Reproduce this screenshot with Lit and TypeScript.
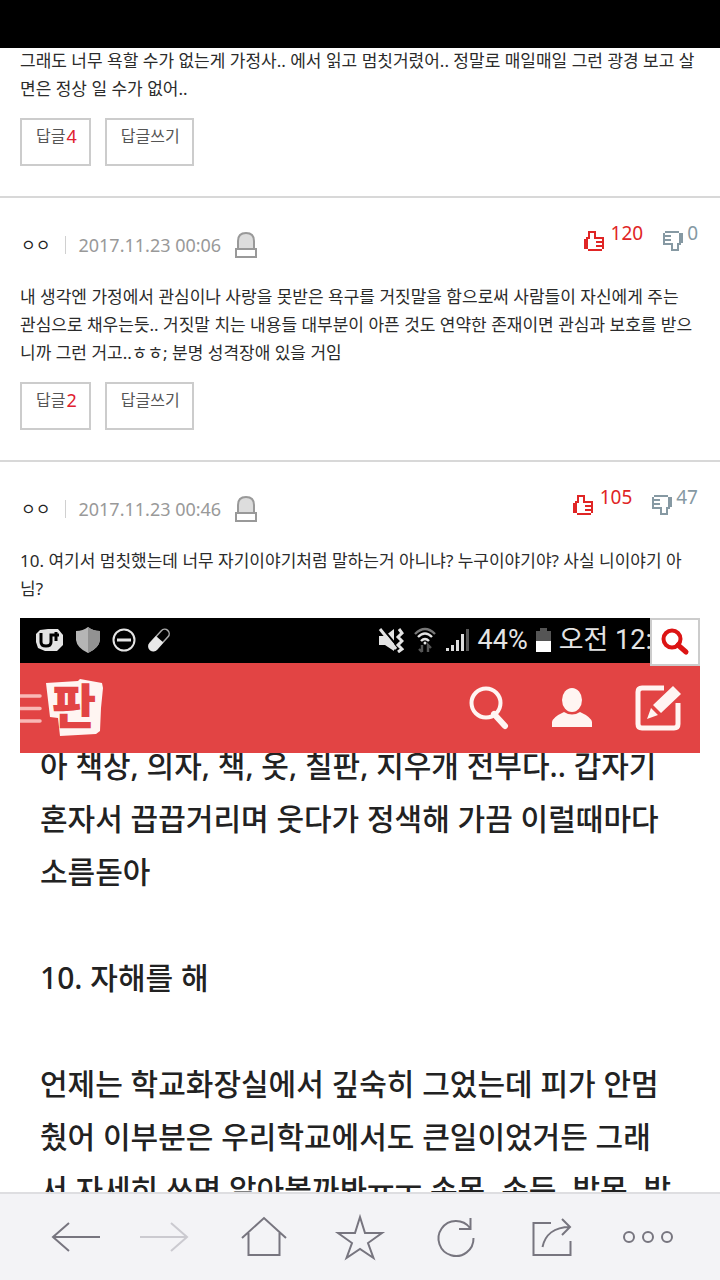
import { LitElement, html, css, svg, nothing } from "lit";
import { customElement, property } from "lit/decorators.js";

const THUMB = [
  "..####....",
  "..#..#....",
  "..#..#....",
  ".##..#####",
  "##.......#",
  "##....####",
  "##.......#",
  "##....####",
  "##.......#",
  "..#######.",
];

const pixelIcon = (rows: string[]) => html`
  <svg width="20" height="20" viewBox="0 0 10 10" shape-rendering="crispEdges" aria-hidden="true">
    ${rows.map((row, y) =>
      [...row].map((c, x) =>
        c === "#" ? svg`<rect x=${x} y=${y} width="1" height="1" fill="currentColor" />` : nothing
      )
    )}
  </svg>
`;

const THUMB_DOWN = [...THUMB].reverse().map((r) => [...r].reverse().join(""));

interface Comment {
  author?: string;
  date?: string;
  up?: number;
  down?: number;
  lines: string[];
  replies?: number;
  photo?: boolean;
}

const COMMENTS: Comment[] = [
  {
    lines: [
      "그래도 너무 욕할 수가 없는게 가정사.. 에서 읽고 멈칫거렸어.. 정말로 매일매일 그런 광경 보고 살",
      "면은 정상 일 수가 없어..",
    ],
    replies: 4,
  },
  {
    author: "ㅇㅇ",
    date: "2017.11.23 00:06",
    up: 120,
    down: 0,
    lines: [
      "내 생각엔 가정에서 관심이나 사랑을 못받은 욕구를 거짓말을 함으로써 사람들이 자신에게 주는",
      "관심으로 채우는듯.. 거짓말 치는 내용들 대부분이 아픈 것도 연약한 존재이면 관심과 보호를 받으",
      "니까 그런 거고..ㅎㅎ; 분명 성격장애 있을 거임",
    ],
    replies: 2,
  },
  {
    author: "ㅇㅇ",
    date: "2017.11.23 00:46",
    up: 105,
    down: 47,
    lines: [
      "10. 여기서 멈칫했는데 너무 자기이야기처럼 말하는거 아니냐? 누구이야기야? 사실 니이야기 아",
      "님?",
    ],
    photo: true,
  },
];

@customElement("photo-card")
export class PhotoCard extends LitElement {
  static styles = css`
    :host { display: block; position: relative; color: #222; }
    .status {
      display: flex; align-items: center; gap: 11px; box-sizing: border-box; height: 45px; padding: 0 48px 2px 16px;
      background: #000; color: #e4e4e4; overflow: hidden;
      font: 27px/42px Roboto, "Noto Sans CJK KR", sans-serif; white-space: nowrap;
    }
    .right { display: flex; align-items: center; gap: 8px; margin-left: auto; }
    svg { display: block; flex: none; }
    .bar {
      display: flex; align-items: center; height: 90px; padding-right: 19px;
      background: #e24444; color: #fff;
    }
    .bar button { border: 0; padding: 0; background: none; color: inherit; }
    .logo { margin-left: 4px; overflow: visible; }
    .logo text { font: 900 48px "Noto Sans CJK KR", sans-serif; }
    .tools { display: flex; align-items: center; gap: 43px; margin-left: auto; }
    .body { overflow: hidden; padding: 0 20px; background: #fff; }
    .text { margin: -14px 0 0; font: 500 30px/53px "Noto Sans", "Noto Sans CJK KR", sans-serif; }
    .text span { display: block; min-height: 53px; white-space: nowrap; }
    .zoom {
      position: absolute; top: 0; right: 0; display: grid; place-items: center;
      width: 50px; height: 48px; padding: 0; background: #fff; border: 2px solid #ccc;
    }
  `;

  render() {
    const lines = [
      "아 책상, 의자, 책, 옷, 칠판, 지우개 전부다.. 갑자기",
      "혼자서 끕끕거리며 웃다가 정색해 가끔 이럴때마다",
      "소름돋아",
      "",
      "10. 자해를 해",
      "",
      "언제는 학교화장실에서 깊숙히 그었는데 피가 안멈",
      "췄어 이부분은 우리학교에서도 큰일이었거든 그래",
      "서 자세히 쓰면 알아볼까봐ㅠㅜ 손목, 손등, 발목, 발",
    ];
    return html`
      <div class="status">
        <svg width="28" height="24" viewBox="0 0 28 24">
          <path d="M4 2L12 1 22 1 27 7V17L21 23H9L2 20L0 14V6Z" fill="#e4e4e4" />
          <path d="M5 5V14Q5 18 10 18T15 14V7H20V13M17 7H23M20 4V10" fill="none" stroke="#000" stroke-width="3" />
        </svg>
        <svg width="26" height="26" viewBox="0 0 26 26">
          <path d="M13 0Q18 4 25 4V13Q24 21 13 26Q2 21 1 13V4Q8 4 13 0Z" fill="#b5b5b5" />
          <path d="M13 0Q18 4 25 4V13Q24 21 13 26Z" fill="#929292" />
        </svg>
        <svg width="24" height="24" viewBox="0 0 24 24" fill="none" stroke="#e4e4e4">
          <circle cx="12" cy="12" r="10.5" stroke-width="2" /><path d="M5 12H19" stroke-width="3" />
        </svg>
        <svg width="24" height="26" viewBox="0 0 24 26">
          <g transform="rotate(42 12 13)">
            <rect x="7.5" y="0" width="9" height="26" rx="4.5" fill="none" stroke="#aaa" stroke-width="1.5" />
            <path d="M7 12H17V21.5A5 5 0 0 1 7 21.5Z" fill="#e8e8e8" />
          </g>
        </svg>
        <div class="right">
          <svg width="26" height="26" viewBox="0 0 26 26">
            <path d="M1 9H7L16 2V24L7 18H1Z" fill="#e4e4e4" />
            <path d="M4 1L20 20" stroke="#000" stroke-width="2" /><path d="M2 2L18 22" stroke="#e4e4e4" stroke-width="3" />
            <path d="M21 2L24 6 20 10 24 14 20 18 24 22 20 25" fill="none" stroke="#e4e4e4" stroke-width="3" />
          </svg>
          <svg width="26" height="26" viewBox="0 0 26 26" fill="none" stroke-width="2.4">
            <path d="M3 7Q13 -3 23 7" stroke="#777" />
            <path d="M6 10Q13 3 20 10M9 14Q13 10 17 14" stroke="#e4e4e4" />
            <circle cx="13" cy="16" r="1.5" fill="#e4e4e4" />
            <path d="M10 18V25M7 22L10 25M16 25V18L19 21" stroke="#555" />
          </svg>
          <svg width="24" height="24" viewBox="0 0 24 24">
            <path d="M0 23V20H3V23ZM5 23V17H8V23ZM10 23V12H13V23ZM15 23V6H18V23Z" fill="#ddd" />
            <path d="M20 23V1H23V23Z" fill="#555" />
          </svg>
          <span>44%</span>
          <svg width="15" height="24" viewBox="0 0 15 24">
            <path d="M4 0H11V3H15V24H0V3H4Z" fill="#555" /><path d="M0 13H15V24H0Z" fill="#fff" />
          </svg>
          <span>오전 12:</span>
        </div>
      </div>
      <div class="bar">
        <button aria-label="메뉴">
          <svg width="22" height="30" viewBox="0 0 22 30" stroke="#f9b9b6" stroke-width="3.5" stroke-linecap="round">
            <path d="M-2 3H20M-2 15.5H20M-2 28H20" />
          </svg>
        </button>
        <svg class="logo" width="58" height="58" viewBox="0 0 58 58">
          <path d="M0 4L32 2 34 0 56 4 57 9 55 29 54 52 50 55 14 57 12 39 4 38Z" fill="#fff5f2" />
          <text x="28" y="45" text-anchor="middle" fill="#e24444">판</text>
        </svg>
        <div class="tools">
          <button aria-label="검색">
            <svg width="40" height="44" viewBox="0 0 40 44" fill="none" stroke="#fff5f2">
              <circle cx="17" cy="17" r="14.5" stroke-width="4" /><path d="M25 28L36 40" stroke-width="6" stroke-linecap="round" />
            </svg>
          </button>
          <button aria-label="내 정보">
            <svg width="40" height="40" viewBox="0 0 40 40" fill="#fff5f2">
              <ellipse cx="20" cy="12" rx="10" ry="12" />
              <path d="M0 39V34Q1 29 12 24Q20 29 28 24Q39 29 40 34V39Z" />
            </svg>
          </button>
          <button aria-label="글쓰기">
            <svg width="46" height="46" viewBox="0 0 46 46">
              <path d="M29 3H7Q3 3 3 7V39Q3 43 7 43H39Q43 43 43 39V18" fill="none" stroke="#fff5f2" stroke-width="5" />
              <path d="M38 1L46 9 26 28 18 20ZM16 23L23 30 12 34Z" fill="#fff5f2" />
            </svg>
          </button>
        </div>
      </div>
      <div class="body">
        <p class="text">${lines.map((l) => html`<span>${l}</span>`)}</p>
      </div>
      <button class="zoom" aria-label="크게 보기">
        <svg width="30" height="28" viewBox="0 0 30 28" fill="none" stroke="#dc1414">
          <circle cx="12" cy="11" r="8.5" stroke-width="4" /><path d="M18 17L26 24" stroke-width="5" stroke-linecap="round" />
        </svg>
      </button>
    `;
  }
}

@customElement("comment-item")
export class CommentItem extends LitElement {
  @property({ attribute: false }) data!: Comment;

  static styles = css`
    :host { display: block; padding: 0 20px 30px; border-bottom: 2px solid #d8d8d8; }
    :host(:last-child) { border-bottom: 0; padding-bottom: 0; }
    .head { display: flex; align-items: center; height: 85px; padding: 8px 2px 0 1px; box-sizing: border-box;
      font: 18px/24px "Noto Sans", "Noto Sans CJK KR", sans-serif; color: #999; }
    .author { font-size: 16px; color: #222; }
    .date { margin-left: 15px; padding-left: 12px; border-left: 1px solid #d0d0d0; line-height: 18px; }
    button { font: inherit; background: none; }
    .bell, .vote { display: flex; border: 0; padding: 0; }
    .bell { margin-left: 14px; }
    .votes { display: flex; align-self: flex-start; gap: 20px; margin-left: auto; padding-top: 15px; font-size: 19px; }
    .vote { align-items: flex-start; gap: 7px; color: #e02525; }
    .vote svg { margin-top: 10px; }
    .down { gap: 4px; color: #8699a3; }
    .text { margin: 0; color: #2b2b2b; font: 17px/28px "Noto Sans", "Noto Sans CJK KR", sans-serif; }
    .text span { display: block; }
    .actions { display: flex; gap: 14px; margin-top: 15px; }
    .actions button {
      display: flex; align-items: flex-start; gap: 1px; height: 48px; padding: 4px 12px 0 14px;
      border: 2px solid #ccc; color: #555; font: 16px/24px "Noto Sans", "Noto Sans CJK KR", sans-serif;
    }
    .actions b { font-weight: 400; font-size: 18px; color: #e02030; }
    photo-card { margin-top: 15px; }
  `;

  render() {
    const d = this.data;
    return html`
      ${d.author
        ? html`<header class="head">
            <span class="author">${d.author}</span>
            <time class="date">${d.date}</time>
            <button class="bell" aria-label="신고">
              <svg width="22" height="26" viewBox="0 0 22 26" stroke="#999" stroke-width="2">
                <path d="M3 17V9Q3 1 11 1T19 9V17" fill="#ddd" />
                <rect x="1" y="17" width="20" height="8" fill="#fff" />
              </svg>
            </button>
            <div class="votes">
              <button class="vote" aria-label="추천">${pixelIcon(THUMB)}<span>${d.up}</span></button>
              <button class="vote down" aria-label="반대">${pixelIcon(THUMB_DOWN)}<span>${d.down}</span></button>
            </div>
          </header>`
        : nothing}
      <p class="text">${d.lines.map((l) => html`<span>${l}</span>`)}</p>
      ${d.replies
        ? html`<div class="actions">
            <button><span>답글</span><b>${d.replies}</b></button>
            <button>답글쓰기</button>
          </div>`
        : nothing}
      ${d.photo ? html`<photo-card></photo-card>` : nothing}
    `;
  }
}

@customElement("app-root")
export class AppRoot extends LitElement {
  static styles = css`
    :host { display: flex; flex-direction: column; height: 100vh; background: #fff; overflow: hidden; }
    .top { flex: none; height: 48px; background: #000; }
    main { flex: 1; min-height: 0; overflow: hidden; }
    .list { margin-top: -1px; }
    nav {
      flex: none; display: flex; align-items: center; box-sizing: border-box; height: 88px;
      padding: 0 24px; background: #f3f3f6; border-top: 2px solid #dedee1;
    }
    nav button { flex: 1; display: grid; place-items: center; padding: 0; border: 0; background: none; color: #77757f; }
    nav button:disabled { color: #cbcad0; }
  `;

  render() {
    const items: [string, unknown][] = [
      ["뒤로", svg`<path d="M56 28H9M25 14L9 28 25 42" />`],
      ["앞으로", svg`<path d="M0 28H47M31 14L47 28 31 42" />`],
      ["홈", svg`<path d="M6 29L28 9 50 29M12.5 24V46H43.5V24" />`],
      ["즐겨찾기", svg`<path d="M28 8L33 24H50L36 34 41.5 49 28 40 14.5 49 20 34 6 24H23Z" />`],
      ["새로고침", svg`<path d="M45.5 29A17.5 17.5 0 1 1 42 19M42.5 9V20H31" />`],
      ["공유", svg`<path d="M27 14H9.5V46H46.5V32M18.5 38C21 26 30 18 46 18M38 10L46 18 38 26" />`],
      ["더보기", svg`<circle cx="9" cy="28" r="5" /><circle cx="28" cy="28" r="5" /><circle cx="47" cy="28" r="5" />`],
    ];
    return html`
      <div class="top"></div>
      <main>
        <div class="list">${COMMENTS.map((c) => html`<comment-item .data=${c}></comment-item>`)}</div>
      </main>
      <nav>
        ${items.map(
          ([label, icon], i) => html`<button aria-label=${label} ?disabled=${i === 1}>
            <svg width="56" height="56" viewBox="0 0 56 56" fill="none" stroke="currentColor" stroke-width="2">${icon}</svg>
          </button>`
        )}
      </nav>
    `;
  }
}
